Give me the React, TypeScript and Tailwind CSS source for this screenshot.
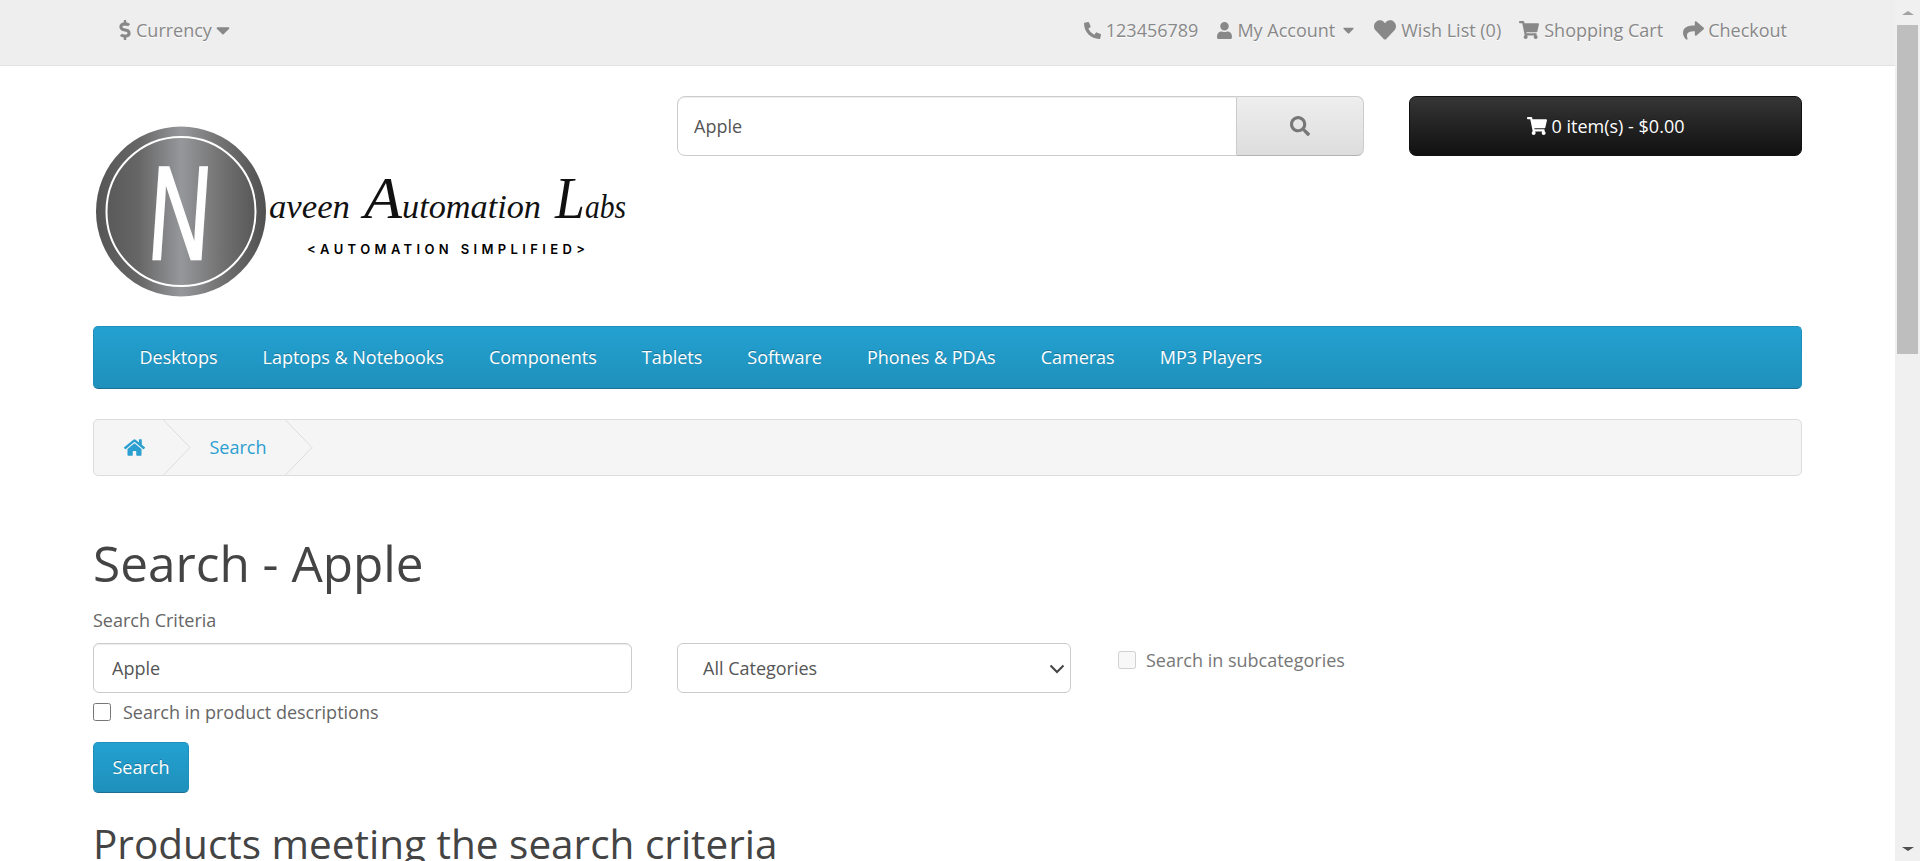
import { FaCaretDown, FaDollarSign, FaHeart, FaHome, FaPhoneAlt, FaSearch, FaShare, FaShoppingCart, FaUser } from "react-icons/fa";

const NAV = ["Desktops", "Laptops & Notebooks", "Components", "Tablets", "Software", "Phones & PDAs", "Cameras", "MP3 Players"];

function Logo() {
  const script = "'Liberation Serif', serif";
  return (
    <svg width="540" height="200" viewBox="0 0 540 200" className="block">
      <defs>
        <linearGradient id="metal" x1="0" x2="1" y1="0" y2="0">
          <stop offset="0" stopColor="#555" />
          <stop offset="0.25" stopColor="#666" />
          <stop offset="0.5" stopColor="#96979a" />
          <stop offset="0.75" stopColor="#707070" />
          <stop offset="1" stopColor="#505050" />
        </linearGradient>
      </defs>
      <circle cx="88" cy="96.5" r="85" fill="url(#metal)" />
      <circle cx="88" cy="96.5" r="74.5" fill="none" stroke="#fff" strokeWidth="2" />
      <text x="0" y="0" textAnchor="middle" fill="#fff" stroke="#fff" strokeWidth="2.5" fontFamily="'Liberation Sans', sans-serif" fontSize="133" transform="translate(84 144) skewX(-4) scale(0.64 1)">N</text>
      <g fill="#111" fontFamily={script} fontStyle="italic">
        <text x="176" y="103" fontSize="33" textLength="81" lengthAdjust="spacingAndGlyphs">aveen</text>
        <text x="271" y="103" fontSize="33" textLength="177" lengthAdjust="spacingAndGlyphs"><tspan fontSize="60">A</tspan>utomation</text>
        <text x="462" y="103" fontSize="33" textLength="71" lengthAdjust="spacingAndGlyphs"><tspan fontSize="60">L</tspan>abs</text>
      </g>
      <text x="214" y="139" fill="#000" fontFamily="Inter, sans-serif" fontWeight="600" fontSize="13" textLength="278">{"<AUTOMATION SIMPLIFIED>"}</text>
    </svg>
  );
}

function Chevron() {
  return (
    <svg width="29" height="57" viewBox="0 0 29 57" className="-my-px block shrink-0">
      <path d="M0.5 0 L28 28.5 L0.5 57" fill="none" stroke="#ddd" strokeWidth="1" />
    </svg>
  );
}

export default function App() {
  return (
    <div className="flex h-[861px] w-full overflow-hidden bg-white font-['Open_Sans',sans-serif] text-[16px] text-[#666]">
      <div className="min-w-0 flex-1">
        <div className="h-[66px] border-b border-[#e2e2e2] bg-[#eeeeee] px-[93px] text-[#888] [text-shadow:0_1px_0_#fff]">
          <div className="flex h-[60px] items-center justify-between pl-[26px] pr-[15px]">
            <div className="flex items-center">
              <FaDollarSign className="mr-[5px] h-[20px] w-[12px]" />
              <span className="text-[18px]">Currency</span>
              <FaCaretDown className="ml-[4px] h-[22px] w-[14px]" />
            </div>
            <div className="flex items-center text-[18px]">
              <FaPhoneAlt className="mr-[5px] h-[17px] w-[17px]" />
              <span>123456789</span>
              <FaUser className="ml-[19px] mr-[5px] h-[17px] w-[15px]" />
              <span>My Account</span>
              <FaCaretDown className="ml-[8px] h-[18px] w-[11px]" />
              <FaHeart className="ml-[20px] mr-[5px] h-[22px] w-[22px]" />
              <span>Wish List (0)</span>
              <FaShoppingCart className="ml-[18px] mr-[5px] h-[18px] w-[20px]" />
              <span>Shopping Cart</span>
              <FaShare className="ml-[20px] mr-[4px] h-[21px] w-[21px]" />
              <span>Checkout</span>
            </div>
          </div>
        </div>

        <div className="px-[93px]">
          <div className="flex h-[260px] pt-[30px]">
            <div className="w-[584px] shrink-0 pt-[19px]">
              <Logo />
            </div>
            <div className="flex h-[60px] w-[687px] shrink-0">
              <input readOnly defaultValue="Apple" className="h-full min-w-0 flex-1 rounded-l-[8px] border border-[#ccc] bg-white px-[16px] text-[18px] text-[#555] shadow-[inset_0_1px_1px_rgba(0,0,0,0.075)] outline-none" />
              <div className="flex w-[127px] items-center justify-center rounded-r-[7px] border border-l-0 border-[#cccccc] border-b-[#b3b3b3] bg-gradient-to-b from-[#eeeeee] to-[#dddddd] text-[#777] [filter:drop-shadow(0_1px_0_#fff)]">
                <FaSearch className="h-[20px] w-[20px]" />
              </div>
            </div>
            <div className="ml-[45px] flex h-[60px] flex-1 items-center justify-center rounded-[7px] border border-[#111] bg-gradient-to-b from-[#363636] to-[#111] text-[18px] text-white [text-shadow:0_-1px_0_rgba(0,0,0,0.25)]">
              <FaShoppingCart className="mr-[5px] h-[18px] w-[20px]" />
              <span>0 item(s) - $0.00</span>
            </div>
          </div>

          <nav className="flex h-[63px] items-center rounded-[5px] border border-[#1f90bb] border-b-[#1b6f92] bg-gradient-to-b from-[#23a1d1] to-[#1f90bb] pl-[23px] text-[18px] text-white [text-shadow:0_-1px_0_rgba(0,0,0,0.25)]">
            {NAV.map((n) => (
              <a key={n} className="whitespace-nowrap px-[22.5px]">{n}</a>
            ))}
          </nav>

          <div className="mt-[30px] flex h-[57px] items-center rounded-[5px] border border-[#dddddd] bg-[#f5f5f5] text-[#2a9fd0]">
            <div className="flex w-[67.5px] pl-[30px]"><FaHome className="h-[19px] w-[21px]" /></div>
            <Chevron />
            <span className="ml-[19px] w-[74px] text-[18px]">Search</span>
            <Chevron />
          </div>

          <h1 className="mt-[52px] text-[49.5px] leading-[70px] text-[#444]">Search - Apple</h1>

          <label className="mt-[9px] block text-[18px] leading-[26px]">Search Criteria</label>

          <div className="mt-[10px] flex items-start">
            <div className="w-[539px] shrink-0">
              <input readOnly defaultValue="Apple" className="block h-[50px] w-full rounded-[6px] border border-[#ccc] px-[18px] text-[18px] text-[#555] shadow-[inset_0_1px_1px_rgba(0,0,0,0.075)] outline-none" />
              <label className="mt-[6px] flex items-center text-[18px] leading-[26px]">
                <input type="checkbox" className="mr-[12px] h-[18px] w-[18px]" />
                Search in product descriptions
              </label>
            </div>
            <div className="relative ml-[45px] h-[50px] w-[394px] shrink-0">
              <select className="h-full w-full appearance-none rounded-[6px] border border-[#ccc] bg-white pl-[25px] pr-[8px] text-[18px] text-[#555] outline-none">
                <option>All Categories</option>
              </select>
              <svg width="16" height="10" viewBox="0 0 16 10" className="pointer-events-none absolute left-[372px] top-[21px]">
                <path d="M1.5 1.5 L8 8 L14.5 1.5" fill="none" stroke="#444" strokeWidth="2" />
              </svg>
            </div>
            <label className="ml-[47px] mt-[4px] flex items-center text-[18px] leading-[26px] text-[#777]">
              <input type="checkbox" disabled className="mr-[10px] h-[18px] w-[18px]" />
              Search in subcategories
            </label>
          </div>

          <button className="mt-[17px] block h-[51px] w-[96px] rounded-[5px] border border-[#1f90bb] border-b-[#1b6f92] bg-gradient-to-b from-[#23a1d1] to-[#1f90bb] text-[18px] text-white [text-shadow:0_-1px_0_rgba(0,0,0,0.25)]">Search</button>

          <h2 className="mt-[23px] whitespace-nowrap text-[40.5px] leading-[56px] text-[#444]">Products meeting the search criteria</h2>
        </div>
      </div>

      <div className="flex w-[25px] shrink-0 flex-col items-center bg-[#f0f0f0]">
        <div className="flex h-[25px] w-full items-center justify-center">
          <div className="h-0 w-0 border-x-[6px] border-b-[4px] border-x-transparent border-b-[#a3a3a3]" />
        </div>
        <div className="h-[329px] w-[21px] bg-[#bebebe]" />
        <div className="flex-1" />
        <div className="flex h-[25px] w-full items-center justify-center">
          <div className="h-0 w-0 border-x-[6px] border-t-[4px] border-x-transparent border-t-[#505050]" />
        </div>
      </div>
    </div>
  );
}
